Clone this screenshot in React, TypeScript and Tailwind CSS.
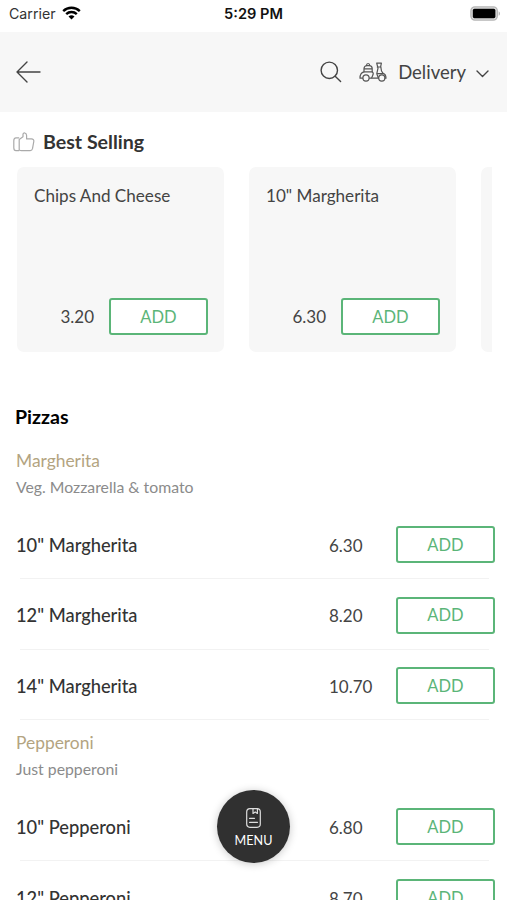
import { clsx } from "clsx";

const bestSelling = [
  { name: "Chips And Cheese", price: "3.20" },
  { name: '10" Margherita', price: "6.30" },
];

const pizzas = [
  {
    name: "Margherita",
    description: "Veg. Mozzarella & tomato",
    items: [
      { name: '10" Margherita', price: "6.30" },
      { name: '12" Margherita', price: "8.20" },
      { name: '14" Margherita', price: "10.70" },
    ],
  },
  {
    name: "Pepperoni",
    description: "Just pepperoni",
    items: [
      { name: '10" Pepperoni', price: "6.80" },
      { name: '12" Pepperoni', price: "8.70" },
    ],
  },
];

function AddButton({ className }: { className?: string }) {
  return (
    <button
      className={clsx(
        "h-[37px] w-[99px] shrink-0 rounded-[3px] border-2 border-[#5bb578] bg-white pt-px text-[16.5px] leading-none text-[#5bb578]",
        className
      )}
    >
      ADD
    </button>
  );
}

function StatusBar() {
  return (
    <div className="grid h-8 grid-cols-3 items-start bg-white pr-[6px] pl-[9px] font-['Inter','Liberation_Sans',sans-serif]">
      <div className="flex h-7 items-center gap-[6px] text-[14.2px] text-[#333]">
        <span className="-mt-px">Carrier</span>
        <svg width="19" height="14" viewBox="0 0 19 14" className="-mt-[2px]" fill="none" stroke="#000" strokeWidth="2.4">
          <path d="M1.2 5.1a12 12 0 0 1 16.6 0" />
          <path d="M4.2 8.2a7.6 7.6 0 0 1 10.6 0" />
          <path d="M9.5 13.6 6.5 10.6a4.3 4.3 0 0 1 6 0z" fill="#000" stroke="none" />
        </svg>
      </div>
      <span className="h-7 pr-[3px] text-center text-[14.6px] leading-7 font-semibold text-[#111]">
        5:29 PM
      </span>
      <div className="flex h-[26px] items-center justify-end">
        <svg width="31" height="15" viewBox="0 0 31 15">
          <rect x="0.9" y="0.9" width="26.4" height="13.2" rx="4" fill="#ddd" stroke="#b5b5b5" strokeWidth="1.3" />
          <rect x="2.8" y="2.8" width="22.6" height="9.4" rx="1.6" />
          <path d="M28.7 5.2v4.600c1.600-.7 1.600-3.900 0-4.600z" fill="#aaa" />
        </svg>
      </div>
    </div>
  );
}

function Header() {
  return (
    <header className="flex h-20 items-center bg-[#f7f7f7] pr-[18px] pl-4 text-[#444]">
      <svg width="25" height="22" viewBox="0 0 25 22" fill="none" stroke="currentColor" strokeWidth="1.4" strokeLinecap="round" strokeLinejoin="round">
        <path d="M24 11H1M11 1 1 11l10 10" />
      </svg>
      <svg width="22" height="22" viewBox="0 0 22 22" className="ml-auto" fill="none" stroke="currentColor" strokeWidth="1.4" strokeLinecap="round">
        <circle cx="9.3" cy="9.3" r="8.2" />
        <path d="m15.2 15.2 5.4 5.3" />
      </svg>
      {/* scooter */}
      <svg width="28" height="20" viewBox="0 0 28 20" className="ml-[17px]" fill="none" stroke="#555" strokeWidth="1.2" strokeLinecap="round" strokeLinejoin="round">
        <path d="M5 9.800V6.600c0-1.700 1.300-3 3-3h2.200c1.700 0 3 1.300 3 3v3.200M5 6.900h8.200M7.500 3.500c0-2.700 3.200-2.700 3.200 0" />
        <path d="M3.600 16.200H1c0-3.500 1.200-5.800 4-6.400h8.200c1.300.8 1.300 2.300.5 3.600l-1.200 2.800h-1.900" />
        <circle cx="7" cy="16" r="3.100" />
        <path d="M13.200 16.200h6.300l-1.700-4.500 1.200-5.600-1.300-4.900h4.700l-.7 3.200.8 4.600 1.600 2.400c1.700.5 2.900 2.400 2.900 4.800h-1" />
        <path d="M18.300 5h3.300M18.500 11.600h5.400" />
        <circle cx="22.800" cy="16" r="3.100" />
      </svg>
      <span className="mt-[2px] ml-[11px] text-[18.5px]">Delivery</span>
      <svg width="13" height="8" viewBox="0 0 13 8" className="mt-[3px] ml-[10px]" fill="none" stroke="currentColor" strokeWidth="1.4" strokeLinecap="round" strokeLinejoin="round">
        <path d="m1 1 5.500 5.500L12 1" />
      </svg>
    </header>
  );
}

function BestSelling() {
  return (
    <section className="h-[281px] pt-[15px]">
      <div className="flex h-[30px] items-center gap-[8px] pl-[13px]">
        <svg width="22" height="20" viewBox="0 0 22 20" fill="none" stroke="#aaa" strokeWidth="1.2" strokeLinejoin="round">
          <path d="M6.200 18V7.400L10 4.800V2.300c0-2.200 3.600-1.700 3.600 1.200v3.400h4.800c1.700 0 2.700 1.100 2.400 2.600l-1.300 7.200c-.3 1.300-1.100 2-2.300 2H8.400c-1 0-1.600-.3-2.200-.7z" />
          <path d="M6.200 5.800H3C1.700 5.800.8 7.100.8 8.800v6.900c0 1.700.9 3 2.200 3h3.200" />
        </svg>
        <h2 className="text-[19.6px] font-bold text-[#333]">Best Selling</h2>
      </div>
      <div className="mr-[15px] ml-[17px] flex gap-[25px] overflow-hidden pt-[10px]">
        {bestSelling.map((item) => (
          <div
            key={item.name}
            className="flex h-[185px] w-[207px] shrink-0 flex-col justify-between rounded-[7px] bg-[#f7f7f7] pt-[17px] pr-4 pb-[17px] pl-[17px]"
          >
            <h3 className="text-[17.1px] leading-6 text-[#444]">{item.name}</h3>
            <div className="flex items-center justify-end gap-[15px]">
              <span className="pt-px text-[17px] text-[#444]">{item.price}</span>
              <AddButton />
            </div>
          </div>
        ))}
        <div className="h-[185px] w-[207px] shrink-0 rounded-[7px] bg-[#f7f7f7]" />
      </div>
    </section>
  );
}

function PizzaList() {
  return (
    <section>
      <h2 className="h-[44px] pl-[15px] text-[19.6px] leading-[47px] font-bold text-black">
        Pizzas
      </h2>
      {pizzas.map((group) => (
        <div key={group.name}>
          <div className="h-[70px] pt-[11px] pl-4">
            <h3 className="text-[17.4px] leading-[26px] text-[#b3a481]">{group.name}</h3>
            <p className="text-[15.8px] leading-[26px] text-[#8b8b8b]">{group.description}</p>
          </div>
          {group.items.map((item) => (
            <div key={item.name} className="h-[70.7px]">
              <div className="flex h-[70px] items-center pt-[5px] pr-[12px] pl-4 text-[#333]">
                <span className="w-[313px] pt-[2px] text-[18.3px] font-medium">{item.name}</span>
                <span className="w-[67px] pt-[2px] text-[17px] text-[#444]">{item.price}</span>
                <AddButton />
              </div>
              <div className="mr-[18px] ml-5 h-px translate-y-px bg-[#f2f2f2]" />
            </div>
          ))}
        </div>
      ))}
    </section>
  );
}

export default function App() {
  return (
    <div className="relative h-[900px] w-[507px] overflow-hidden bg-white font-['Lato',sans-serif]">
      <StatusBar />
      <Header />
      <BestSelling />
      <PizzaList />
      <button className="absolute top-[790px] left-[217px] flex h-[73px] w-[73px] flex-col items-center rounded-full bg-[#303030] pt-[18px] text-white shadow-[0_1px_9px_rgba(0,0,0,0.22)]">
        <svg width="15" height="20" viewBox="0 0 15 20" fill="none" stroke="#ddd" strokeWidth="1.2" strokeLinecap="round" strokeLinejoin="round">
          <rect x="0.7" y="0.7" width="13.6" height="18.6" rx="3.2" />
          <path d="M7 .8v4.600l2.200-1.500 2.200 1.500V.8M3.500 10.300h5M3.500 14.300h8" />
        </svg>
        <span className="mt-[5px] text-[12.6px] leading-4">MENU</span>
      </button>
    </div>
  );
}
